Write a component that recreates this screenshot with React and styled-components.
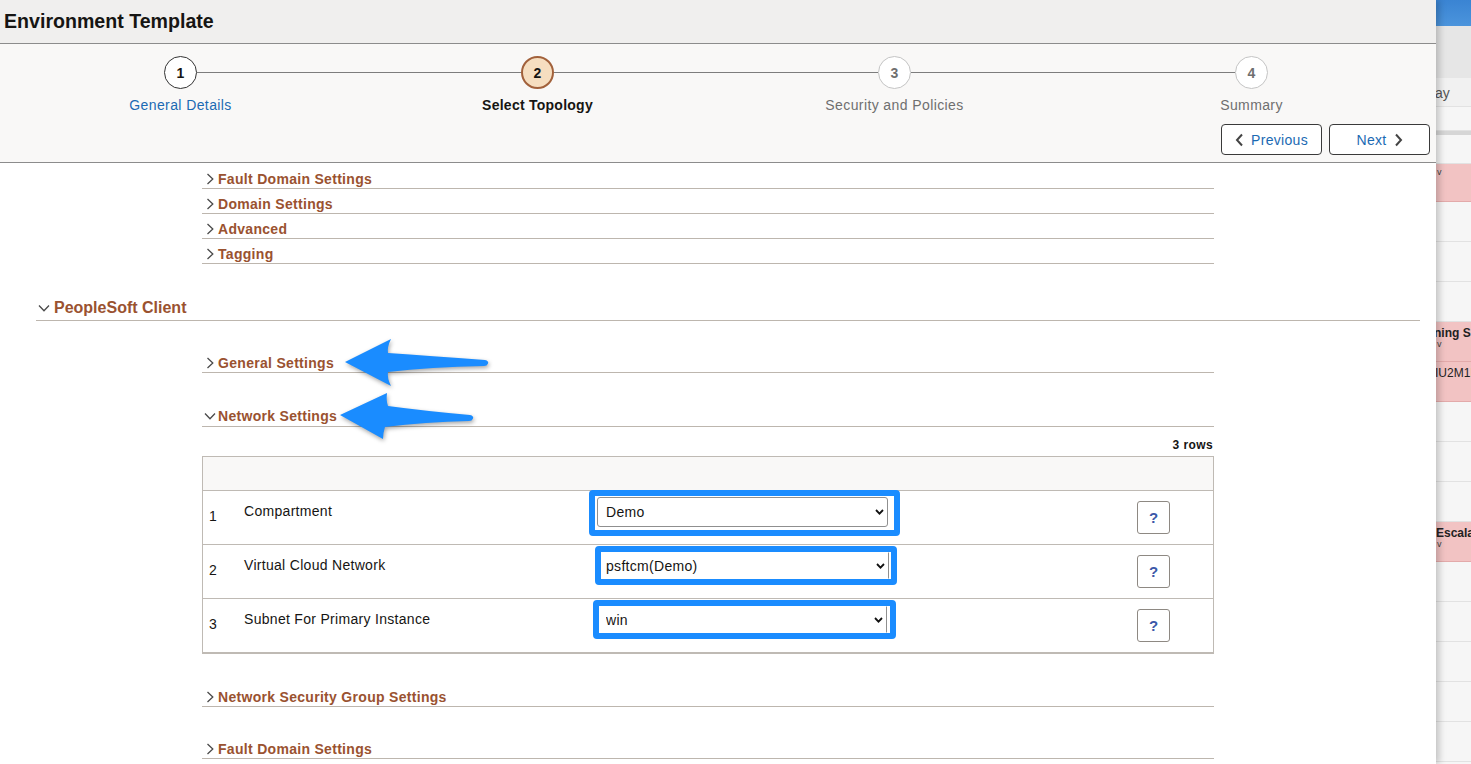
import React from 'react';
import styled, { createGlobalStyle } from 'styled-components';

const GlobalStyle = createGlobalStyle`
  html, body { margin: 0; padding: 0; background: #fff; overflow: hidden; }
  body { font-family: "Liberation Sans", Arial, sans-serif; color: #161513; }
  * { box-sizing: border-box; }
`;

const BROWN = '#9a5230';
const LINE = '#bdb6ae';

const Page = styled.div`
  display: flex;
  width: 1471px;
  height: 764px;
  overflow: hidden;
`;

const Panel = styled.main`
  position: relative;
  z-index: 1;
  width: 1436px;
  height: 764px;
  flex: none;
  background: #fff;
  display: flex;
  flex-direction: column;
  overflow: hidden;
  box-shadow: 3px 0 7px rgba(0, 0, 0, 0.22);
`;

const TitleBar = styled.header`
  height: 44px;
  flex: none;
  background: #f0efee;
  border-bottom: 1px solid #8c8c8c;
  display: flex;
  align-items: center;
  padding-left: 4px;
`;

const Title = styled.h1`
  margin: 0;
  font-size: 19.6px;
  font-weight: bold;
  color: #161513;
`;

const TrainBar = styled.div`
  flex: none;
  background: #f9f8f7;
  border-bottom: 1px solid #8c8c8c;
  padding: 12px 6px 7px 0;
`;

const Steps = styled.div`
  display: grid;
  grid-template-columns: repeat(4, 357px);
  margin-left: 2px;
`;

const Step = styled.div`
  display: flex;
  flex-direction: column;
  align-items: center;
`;

const Track = styled.div`
  display: flex;
  align-items: center;
  width: 100%;
  height: 33px;
`;

const Seg = styled.div`
  flex: 1;
  height: 1px;
  background: ${(p) => (p.$hidden ? 'transparent' : '#7d7d7d')};
`;

const circleStyles = {
  done: 'border: 1px solid #333; background: #fff; color: #161513;',
  current: 'border: 2px solid #a2613b; background: #f6dec0; color: #161513;',
  future: 'border: 1px solid #c4c4c4; background: #fff; color: #6f6f6f;',
};

const Circle = styled.div`
  width: 33px;
  height: 33px;
  flex: none;
  border-radius: 50%;
  display: flex;
  align-items: center;
  justify-content: center;
  font-size: 14px;
  font-weight: bold;
  ${(p) => circleStyles[p.$state]}
`;

const StepLabel = styled.div`
  margin-top: 8px;
  font-size: 14px;
  line-height: 16px;
  white-space: nowrap;
  letter-spacing: ${(p) => (p.$state === 'current' ? '0.25px' : '0.4px')};
  color: ${(p) => (p.$state === 'done' ? '#1b6ab3' : p.$state === 'current' ? '#161513' : '#6f6f6f')};
  font-weight: ${(p) => (p.$state === 'current' ? 'bold' : 'normal')};
`;

const NavRow = styled.div`
  display: flex;
  justify-content: flex-end;
  gap: 7px;
  margin-top: 11px;
`;

const NavButton = styled.button`
  width: 101px;
  height: 31px;
  border: 1px solid #3a3a3a;
  border-radius: 4px;
  background: #fff;
  color: #1b6ab3;
  font-family: "Liberation Sans", Arial, sans-serif;
  font-size: 14px;
  letter-spacing: 0.3px;
  display: flex;
  align-items: center;
  justify-content: center;
  gap: 7px;
  padding: 0;
  cursor: pointer;
`;

const Content = styled.div`
  padding: 1px 16px 0 36px;
  display: flex;
  flex-direction: column;
`;

const SubList = styled.div`
  margin-left: 166px;
  width: 1012px;
  display: flex;
  flex-direction: column;
`;

const AccRow = styled.div`
  display: flex;
  align-items: center;
  gap: 2px;
  margin-top: ${(p) => p.$mt || 0}px;
  padding: 6px 0 ${(p) => p.$pb ?? 0}px 2px;
  line-height: 18px;
  border-bottom: 1px solid ${LINE};
  color: ${BROWN};
  font-size: 14px;
  letter-spacing: 0.3px;
  font-weight: bold;
`;

const SectionRow = styled.div`
  display: flex;
  align-items: center;
  gap: 4px;
  margin-top: 28px;
  padding: 6px 0 2px 2px;
  line-height: 20px;
  border-bottom: 1px solid ${LINE};
  color: ${BROWN};
  font-size: 16px;
  font-weight: bold;
`;

const IconBox = styled.span`
  width: 12px;
  height: 12px;
  flex: none;
  display: flex;
`;

const RowsCount = styled.div`
  margin-top: 11px;
  text-align: right;
  font-size: 12px;
  font-weight: bold;
  letter-spacing: 0.4px;
  line-height: 14px;
  padding-right: 1px;
`;

const Table = styled.div`
  margin-top: 4px;
  border: 1px solid #bfbab4;
  border-bottom-width: 2px;
`;

const HeadRow = styled.div`
  height: 34px;
  background: #f9f8f7;
  border-bottom: 1px solid #bfbab4;
`;

const DataRow = styled.div`
  display: grid;
  grid-template-columns: 41px 345px 548px 1fr;
  height: 54px;
  border-bottom: 1px solid #bfbab4;
  &:last-child { height: 53px; border-bottom: none; }
`;

const NumCell = styled.div`
  padding: 17px 0 0 6px;
  font-size: 14px;
  line-height: 16px;
`;

const LabelCell = styled.div`
  padding-top: 12px;
  font-size: 14px;
  letter-spacing: 0.3px;
  line-height: 16px;
`;

const SelCell = styled.div`
  display: flex;
  align-items: flex-start;
`;

const Highlight = styled.div`
  margin: ${(p) => p.$mt}px 0 0 ${(p) => p.$ml}px;
  border: 6px solid #1a8cff;
  border-radius: 4px;
  padding: ${(p) => p.$pad};
  background: #fff;
`;

const SelectBox = styled.div`
  width: ${(p) => p.$w}px;
  height: ${(p) => p.$h}px;
  display: flex;
  align-items: center;
  background: #fff;
  border: 1px solid ${(p) => (p.$bare ? '#fff' : '#8f8f8f')};
  border-right-color: #8f8f8f;
  border-radius: ${(p) => (p.$bare ? '0' : '3px')};
  padding-right: 3px;
`;

const Select = styled.select`
  appearance: none;
  -webkit-appearance: none;
  flex: 1;
  min-width: 0;
  height: 100%;
  border: none;
  background: transparent;
  outline: none;
  font-family: "Liberation Sans", Arial, sans-serif;
  font-size: 14px;
  letter-spacing: 0.3px;
  color: #161513;
  padding: 0 0 0 ${(p) => p.$pl}px;
`;

const HelpCell = styled.div`
  padding-top: 10px;
`;

const HelpButton = styled.button`
  width: 33px;
  height: 33px;
  border: 1px solid #8e8983;
  border-radius: 3px;
  background: #fff;
  color: #3b58a8;
  font-family: "Liberation Sans", Arial, sans-serif;
  font-size: 15px;
  font-weight: bold;
  padding: 0;
  cursor: pointer;
`;

const ArrowLayer = styled.svg`
  position: absolute;
  left: 330px;
  top: 325px;
  width: 170px;
  height: 130px;
  overflow: visible;
  filter: drop-shadow(1px 2px 2px rgba(0, 0, 0, 0.35));
  pointer-events: none;
`;

/* Side strip: background page peeking out */
const Side = styled.aside`
  width: 35px;
  flex: none;
  overflow: hidden;
  background: #f6f6f6;
  display: flex;
  flex-direction: column;
`;

const SideTop = styled.div`
  height: 26px;
  flex: none;
  background: linear-gradient(#3a84d3, #4b94dc);
`;

const SideHead = styled.div`
  height: 52px;
  flex: none;
  background: #e6e6e6;
`;

const SideRow = styled.div`
  height: ${(p) => p.$h}px;
  flex: none;
  background: ${(p) => (p.$band ? '#d6d6d6' : p.$pink ? '#f2c3c3' : p.$head ? '#f1f1f1' : '#f6f6f6')};
  border-bottom: ${(p) => (p.$band ? 'none' : `1px solid ${p.$pink ? '#e3aaaa' : '#e2e2e2'}`)};
  padding-top: ${(p) => (p.$head ? 8 : 4)}px;
  white-space: nowrap;
  overflow: hidden;
`;

const SideText = styled.div`
  margin-left: ${(p) => p.$shift || 0}px;
  font-size: ${(p) => (p.$head ? 14 : 12)}px;
  line-height: 14px;
  font-weight: ${(p) => (p.$bold ? 'bold' : 'normal')};
  color: ${(p) => (p.$head ? '#555' : '#222')};
`;

const SideMark = styled.div`
  font-size: 9px;
  line-height: 8px;
  color: #444;
  margin-left: 1px;
`;

const ChevronRight = ({ color = '#4a4a4a' }) => (
  <svg width="12" height="12" viewBox="0 0 12 12">
    <path d="M3.5 1 L8.8 6 L3.5 11" fill="none" stroke={color} strokeWidth="1.3" />
  </svg>
);

const ChevronDown = ({ color = '#4a4a4a' }) => (
  <svg width="12" height="12" viewBox="0 0 12 12">
    <path d="M1 3.5 L6 8.8 L11 3.5" fill="none" stroke={color} strokeWidth="1.3" />
  </svg>
);

const NavChevron = ({ dir }) => (
  <svg width="9" height="14" viewBox="0 0 9 14">
    <path
      d={dir === 'left' ? 'M7 1.5 L2 7 L7 12.5' : 'M2 1.5 L7 7 L2 12.5'}
      fill="none"
      stroke="#444"
      strokeWidth="2"
    />
  </svg>
);

const SelectChevron = () => (
  <svg width="9" height="6" viewBox="0 0 9 6">
    <path d="M1 1 L4.5 4.6 L8 1" fill="none" stroke="#111" strokeWidth="1.8" />
  </svg>
);

const steps = [
  { n: 1, label: 'General Details', state: 'done' },
  { n: 2, label: 'Select Topology', state: 'current' },
  { n: 3, label: 'Security and Policies', state: 'future' },
  { n: 4, label: 'Summary', state: 'future' },
];

const rows = [
  { n: 1, label: 'Compartment', value: 'Demo', hl: { mt: -1, ml: 0, pad: '1px 6px 3px 2px' }, box: { w: 291, h: 30, bare: false, pl: 8 } },
  { n: 2, label: 'Virtual Cloud Network', value: 'psftcm(Demo)', hl: { mt: 1, ml: 6, pad: '0 2px 0 0' }, box: { w: 288, h: 27, bare: true, pl: 4 } },
  { n: 3, label: 'Subnet For Primary Instance', value: 'win', hl: { mt: 1, ml: 4, pad: '0 3px 0 0' }, box: { w: 288, h: 27, bare: true, pl: 6 } },
];

const sideRows = [
  { h: 29, head: true, text: 'ay', shift: -1 },
  { h: 24 },
  { h: 3, band: true },
  { h: 29 },
  { h: 38, pink: true, mark: true },
  { h: 40 },
  { h: 40 },
  { h: 40 },
  { h: 40, pink: true, text: 'ning S', bold: true, shift: -2, mark: true },
  { h: 40, pink: true, text: 'IU2M1I', shift: -1 },
  { h: 40 },
  { h: 40 },
  { h: 40 },
  { h: 40, pink: true, text: 'Escala', bold: true, shift: 0, mark: true },
  { h: 40 },
  { h: 40 },
  { h: 40 },
  { h: 40 },
  { h: 40 },
];

export default function App() {
  return (
    <>
      <GlobalStyle />
      <Page>
        <Panel>
          <TitleBar>
            <Title>Environment Template</Title>
          </TitleBar>

          <TrainBar>
            <Steps>
              {steps.map((s, i) => (
                <Step key={s.n}>
                  <Track>
                    <Seg $hidden={i === 0} />
                    <Circle $state={s.state}>{s.n}</Circle>
                    <Seg $hidden={i === steps.length - 1} />
                  </Track>
                  <StepLabel $state={s.state}>{s.label}</StepLabel>
                </Step>
              ))}
            </Steps>
            <NavRow>
              <NavButton>
                <NavChevron dir="left" />
                Previous
              </NavButton>
              <NavButton>
                Next
                <NavChevron dir="right" />
              </NavButton>
            </NavRow>
          </TrainBar>

          <Content>
            <SubList>
              {['Fault Domain Settings', 'Domain Settings', 'Advanced', 'Tagging'].map((t) => (
                <AccRow key={t}>
                  <IconBox><ChevronRight /></IconBox>
                  {t}
                </AccRow>
              ))}
            </SubList>

            <SectionRow>
              <IconBox><ChevronDown /></IconBox>
              PeopleSoft Client
            </SectionRow>

            <SubList>
              <AccRow $mt={27}>
                <IconBox><ChevronRight /></IconBox>
                General Settings
              </AccRow>
              <AccRow $mt={28} $pb={1}>
                <IconBox><ChevronDown /></IconBox>
                Network Settings
              </AccRow>

              <RowsCount>3 rows</RowsCount>
              <Table>
                <HeadRow />
                {rows.map((r) => (
                  <DataRow key={r.n}>
                    <NumCell>{r.n}</NumCell>
                    <LabelCell>{r.label}</LabelCell>
                    <SelCell>
                      <Highlight $mt={r.hl.mt} $ml={r.hl.ml} $pad={r.hl.pad}>
                        <SelectBox $w={r.box.w} $h={r.box.h} $bare={r.box.bare}>
                          <Select $pl={r.box.pl} defaultValue={r.value}>
                            <option value={r.value}>{r.value}</option>
                          </Select>
                          <SelectChevron />
                        </SelectBox>
                      </Highlight>
                    </SelCell>
                    <HelpCell>
                      <HelpButton>?</HelpButton>
                    </HelpCell>
                  </DataRow>
                ))}
              </Table>

              <AccRow $mt={28}>
                <IconBox><ChevronRight /></IconBox>
                Network Security Group Settings
              </AccRow>
              <AccRow $mt={27}>
                <IconBox><ChevronRight /></IconBox>
                Fault Domain Settings
              </AccRow>
            </SubList>
          </Content>

          <ArrowLayer viewBox="0 0 170 130">
            <path
              d="M15 37 L61 14 Q57 22 58 28 Q100 31 155 35 Q159 36 158 38.5 Q157 41 154 41 Q100 42 58 47 Q57 53 61 61 Z"
              fill="#1a8cff"
            />
            <path
              d="M10 90 L57 68 Q56 76 58 81 Q95 86 140 90 Q144 91 143 93.5 Q142 96 139 96 Q95 97 55 102 Q53 108 53 114 Z"
              fill="#1a8cff"
            />
          </ArrowLayer>
        </Panel>

        <Side>
          <SideTop />
          <SideHead />
          {sideRows.map((r, i) => (
            <SideRow key={i} $h={r.h} $pink={r.pink} $band={r.band} $head={r.head}>
              {r.text && (
                <SideText $shift={r.shift} $bold={r.bold} $head={r.head}>
                  {r.text}
                </SideText>
              )}
              {r.mark && <SideMark>v</SideMark>}
            </SideRow>
          ))}
        </Side>
      </Page>
    </>
  );
}
